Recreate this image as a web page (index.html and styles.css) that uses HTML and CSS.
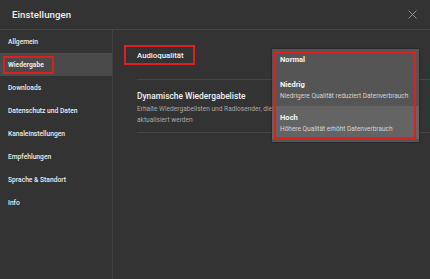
FILE: index.html
```html
<!DOCTYPE html>
<html lang="de">
<head>
<meta charset="utf-8">
<link rel="stylesheet" href="styles.css">
</head>
<body>
<div class="dialog">
  <header class="header">
    <h1 class="title">Einstellungen</h1>
    <button class="close" aria-label="Schließen">
      <svg width="9" height="9" viewBox="0 0 9 9"><path d="M0.5 0.5L8.5 8.5M8.5 0.5L0.5 8.5" stroke="#8f8f8f" stroke-width="1" fill="none"/></svg>
    </button>
  </header>
  <div class="body">
    <nav class="sidebar">
      <div class="nav-item">Allgemein</div>
      <div class="nav-item active"><span class="mark nav-mark">Wiedergabe</span></div>
      <div class="nav-item">Downloads</div>
      <div class="nav-item">Datenschutz und Daten</div>
      <div class="nav-item">Kanaleinstellungen</div>
      <div class="nav-item">Empfehlungen</div>
      <div class="nav-item">Sprache &amp; Standort</div>
      <div class="nav-item">Info</div>
    </nav>
    <main class="content">
      <section class="row row-audio">
        <span class="mark audio-mark">Audioqualität</span>
      </section>
      <section class="row row-dyn">
        <div class="row-title">Dynamische Wiedergabeliste</div>
        <div class="row-desc">Erhalte Wiedergabelisten und Radiosender, die sich ständig<br>aktualisiert werden</div>
      </section>
      <div class="menu">
        <div class="opt opt-normal"><div class="opt-title">Normal</div></div>
        <div class="opt opt-low"><div class="opt-title">Niedrig</div><div class="opt-sub">Niedrigere Qualität reduziert Datenverbrauch</div></div>
        <div class="opt opt-hi"><div class="opt-title">Hoch</div><div class="opt-sub">Höhere Qualität erhöht Datenverbrauch</div></div>
      </div>
    </main>
  </div>
</div>
</body>
</html>
```
FILE: styles.css
```css
* { box-sizing: border-box; }
html, body { margin: 0; padding: 0; }
body {
  width: 430px;
  height: 279px;
  overflow: hidden;
  background: #333333;
  font-family: Roboto, "Liberation Sans", sans-serif;
  color: #ffffff;
}
.dialog {
  width: 430px;
  height: 279px;
  display: flex;
  flex-direction: column;
  background: #333333;
}
.header {
  height: 30px;
  flex: none;
  border-bottom: 1px solid #464646;
  display: flex;
  align-items: center;
  justify-content: space-between;
  padding: 0 13px 1px 12px;
}
.title {
  margin: 0;
  font-size: 9.6px;
  font-weight: 500;
  color: #f0f0f0;
  letter-spacing: 0.1px;
}
.close {
  background: none;
  border: 0;
  padding: 0;
  width: 9px;
  height: 9px;
  display: flex;
}
.body {
  flex: 1;
  display: flex;
  min-height: 0;
}
.sidebar {
  width: 113px;
  flex: none;
  border-right: 1px solid #424242;
}
.nav-item {
  height: 23px;
  display: flex;
  align-items: center;
  padding-left: 8px;
  font-size: 6.7px;
  font-weight: 500;
  color: #ececec;
}
.nav-item.active {
  background: #4a4a4a;
}
.mark {
  display: inline-flex;
  align-items: center;
  border: 2px solid #dc1f1f;
}
.nav-mark {
  height: 18px;
  padding: 0 8px 0 3px;
  margin-left: -5px;
  font-weight: 700;
}
.content {
  flex: 1;
  position: relative;
  padding-left: 24px;
}
.row {
  border-bottom: 1px solid #454545;
}
.row-audio {
  height: 50px;
  display: flex;
  align-items: center;
  padding-top: 1px;
}
.audio-mark {
  height: 20px;
  padding: 0 9px 0 11px;
  margin-left: -13px;
  font-size: 7.8px;
  font-weight: 500;
  color: #f2f2f2;
}
.row-dyn {
  height: 53px;
  padding-top: 11px;
}
.row-title {
  font-size: 8.4px;
  font-weight: 500;
  color: #f2f2f2;
  line-height: 11px;
}
.row-desc {
  margin-top: 2px;
  font-size: 6.6px;
  line-height: 11px;
  color: #a8a8a8;
  white-space: nowrap;
}
.menu {
  position: absolute;
  left: 159px;
  top: 19px;
  width: 147px;
  height: 93px;
  background: #555555;
  padding-bottom: 3px;
  box-shadow: 0 0 2px rgba(0,0,0,0.5);
  display: flex;
  flex-direction: column;
}
.menu::after {
  content: "";
  position: absolute;
  left: 2px;
  top: 2px;
  right: 3px;
  bottom: 3px;
  border: 2px solid #dc1f1f;
  pointer-events: none;
}
.opt {
  padding-left: 8px;
  display: flex;
  flex-direction: column;
  justify-content: center;
}
.opt-normal {
  height: 24px;
  justify-content: flex-start;
  padding-top: 6px;
}
.opt-low {
  height: 33px;
  padding-top: 1px;
}
.opt-hi {
  flex: 1;
  background: #646464;
  padding-top: 1px;
}
.opt-title {
  font-size: 7.6px;
  font-weight: 700;
  color: #f5f5f5;
  line-height: 10px;
}
.opt-sub {
  font-size: 6.5px;
  color: #d4d4d4;
  line-height: 10px;
  margin-top: 1px;
  white-space: nowrap;
}
```
